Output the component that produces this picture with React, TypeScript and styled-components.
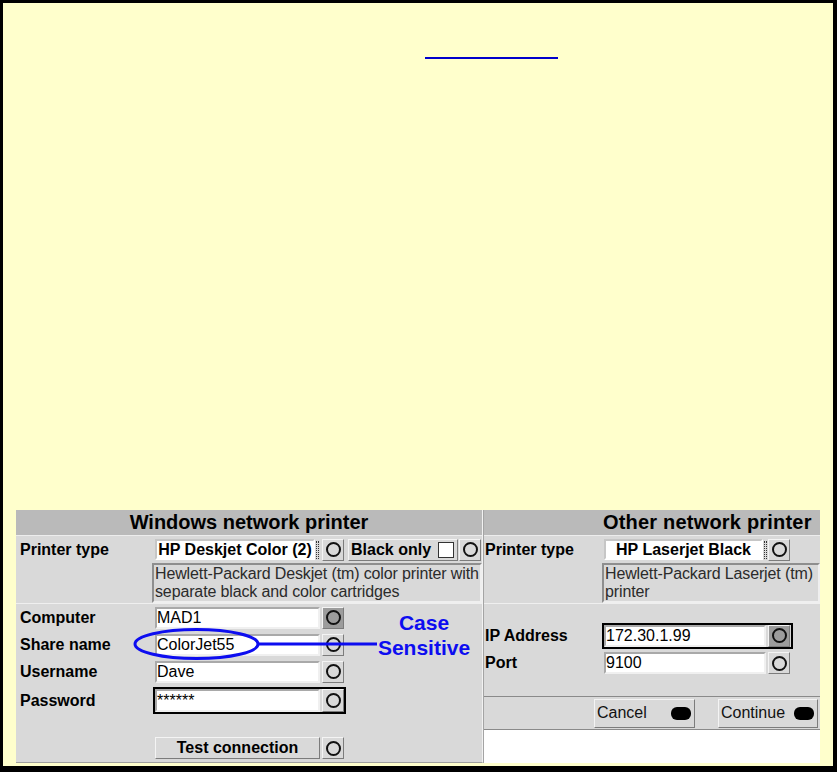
import React from "react";
import styled, { createGlobalStyle } from "styled-components";

const GlobalStyle = createGlobalStyle`
  *, *::before, *::after { box-sizing: border-box; }
  html, body { margin: 0; padding: 0; background: #ffffcc; }
  body { font-family: "Liberation Sans", Arial, Helvetica, sans-serif; }
`;

const Frame = styled.div`
  width: 837px;
  height: 772px;
  border-style: solid;
  border-color: #000;
  border-width: 3px 4px 6px 3px;
  background: #ffffcc;
  display: flex;
  flex-direction: column;
  overflow: hidden;
`;

const TopRule = styled.div`
  width: 133px;
  height: 2px;
  background: #0000cc;
  margin: 54px 0 0 422px;
  flex: none;
`;

const PanelsRow = styled.div`
  display: flex;
  margin: 451px 0 0 13px;
`;

const Panel = styled.div<{ $w: number; $edge: "left" | "right" }>`
  position: relative;
  width: ${(p) => p.$w}px;
  height: 253px;
  flex: none;
  display: flex;
  flex-direction: column;
  background: #d9d9d9;
  ${(p) =>
    p.$edge === "left"
      ? "border-right: 1px solid #f2f2f2; border-bottom: 1px solid #a0a0a0;"
      : "border-left: 1px solid #a4a4a4;"}
`;

const PanelHeader = styled.div<{ $indent?: number }>`
  height: 26px;
  flex: none;
  background: #bababa;
  border-bottom: 1px solid #ededed;
  font-size: 20px;
  font-weight: bold;
  line-height: 25px;
  color: #000;
  text-align: ${(p) => (p.$indent ? "left" : "center")};
  padding-left: ${(p) => p.$indent ?? 0}px;
  letter-spacing: ${(p) => (p.$indent ? "0.2px" : "0")};
  white-space: nowrap;
  overflow: hidden;
`;

const Row = styled.div<{ $h: number; $pl: number; $line?: boolean; $top?: boolean }>`
  height: ${(p) => p.$h}px;
  flex: none;
  display: flex;
  align-items: ${(p) => (p.$top ? "flex-start" : "center")};
  padding-left: ${(p) => p.$pl}px;
  ${(p) => (p.$line ? "border-bottom: 1px solid #efefef;" : "")}
`;

const Spacer = styled.div<{ $h: number }>`
  height: ${(p) => p.$h}px;
  flex: none;
`;

const Label = styled.div<{ $w: number }>`
  width: ${(p) => p.$w}px;
  flex: none;
  font-size: 16px;
  font-weight: bold;
  color: #000;
  white-space: nowrap;
`;

const Controls = styled.div<{ $ml?: number }>`
  display: flex;
  align-items: center;
  margin-left: ${(p) => p.$ml ?? 0}px;
`;

const Field = styled.div<{ $w: number; $h?: number }>`
  width: ${(p) => p.$w}px;
  height: ${(p) => p.$h ?? 22}px;
  flex: none;
  background: #fff;
  border: 2px solid;
  border-color: #a9a9a9 #f0f0f0 #f0f0f0 #a9a9a9;
  font-size: 16px;
  line-height: 18px;
  color: #000;
  display: flex;
  align-items: center;
  white-space: nowrap;
  overflow: hidden;
`;

const SelectBox = styled.div<{ $w: number }>`
  width: ${(p) => p.$w}px;
  height: 21px;
  flex: none;
  background: #fff;
  border: 2px solid;
  border-color: #c6c6c6 #fff #fff #c6c6c6;
  font-size: 16px;
  font-weight: bold;
  line-height: 17px;
  text-align: center;
  white-space: nowrap;
  overflow: hidden;
`;

const Dots = styled.span`
  width: 3px;
  height: 18px;
  margin: 0 1px;
  flex: none;
  border-left: 1px dotted #333;
  border-right: 1px dotted #333;
`;

const OButton = styled.div<{ $dark?: boolean; $h?: number; $ml?: number }>`
  width: 22px;
  height: ${(p) => p.$h ?? 22}px;
  flex: none;
  margin-left: ${(p) => p.$ml ?? 2}px;
  display: flex;
  align-items: center;
  justify-content: center;
  background: ${(p) => (p.$dark ? "#9c9c9c" : "#d9d9d9")};
  border: 1px solid;
  border-color: #f4f4f4 #7c7c7c #7c7c7c #f4f4f4;
`;

const Ring = styled.span`
  width: 15px;
  height: 15px;
  border: 2px solid #111;
  border-radius: 50%;
`;

const ToggleBox = styled.div`
  margin-left: 4px;
  width: 110px;
  height: 22px;
  flex: none;
  display: flex;
  align-items: center;
  justify-content: space-between;
  padding: 0 3px 0 2px;
  border: 1px solid;
  border-color: #f4f4f4 #7c7c7c #7c7c7c #f4f4f4;
  font-size: 16px;
  font-weight: bold;
  white-space: nowrap;
`;

const Check = styled.span`
  width: 16px;
  height: 16px;
  background: #fff;
  border: 1px solid #333;
`;

const DescBox = styled.div<{ $w: number }>`
  width: ${(p) => p.$w}px;
  height: 40px;
  flex: none;
  border: 2px solid;
  border-color: #8e8e8e #efefef #efefef #8e8e8e;
  font-size: 16px;
  line-height: 18px;
  letter-spacing: -0.13px;
  color: #2b2b2b;
  padding: 0 0 0 1px;
  white-space: nowrap;
  overflow: hidden;
`;

const Group = styled.div<{ $pr?: number }>`
  display: flex;
  align-items: stretch;
  border: 2px solid #000;
  padding-right: ${(p) => p.$pr ?? 0}px;
`;

const WideButton = styled.div`
  width: 165px;
  height: 22px;
  flex: none;
  display: flex;
  align-items: center;
  justify-content: center;
  border: 1px solid;
  border-color: #f4f4f4 #7c7c7c #7c7c7c #f4f4f4;
  font-size: 16px;
  font-weight: bold;
`;

const ButtonBar = styled.div`
  height: 34px;
  flex: none;
  display: flex;
  align-items: center;
  justify-content: flex-end;
  gap: 23px;
  padding-right: 2px;
  border-top: 1px solid #8a8a8a;
  border-bottom: 1px solid #8a8a8a;
`;

const BarButton = styled.div<{ $w: number }>`
  width: ${(p) => p.$w}px;
  height: 29px;
  display: flex;
  align-items: center;
  justify-content: space-between;
  padding: 0 3px 0 2px;
  border: 1px solid;
  border-color: #f4f4f4 #7c7c7c #7c7c7c #f4f4f4;
  font-size: 16px;
  color: #111;
`;

const Pill = styled.span`
  width: 20px;
  height: 13px;
  background: #000;
  border-radius: 6px;
`;

const WhiteArea = styled.div`
  flex: 1;
  background: #fff;
`;

const NoteMarks = styled.svg`
  position: absolute;
  left: 114px;
  top: 118px;
  width: 250px;
  height: 34px;
  pointer-events: none;
`;

const NoteText = styled.div`
  position: absolute;
  left: 348px;
  top: 100px;
  width: 120px;
  text-align: center;
  font-size: 21px;
  font-weight: bold;
  line-height: 25px;
  color: #0d0df0;
`;

const O = ({ dark, h, ml }: { dark?: boolean; h?: number; ml?: number }) => (
  <OButton $dark={dark} $h={h} $ml={ml}>
    <Ring />
  </OButton>
);

export default function App() {
  return (
    <>
      <GlobalStyle />
      <Frame>
        <TopRule />
        <PanelsRow>
          <Panel $w={467} $edge="left">
            <PanelHeader>Windows network printer</PanelHeader>
            <Row $h={27} $pl={4}>
              <Label $w={132}>Printer type</Label>
              <Controls $ml={3}>
                <SelectBox $w={160}>HP Deskjet Color (2)</SelectBox>
                <Dots />
                <O ml={2} />
                <ToggleBox>
                  Black only
                  <Check />
                </ToggleBox>
                <O ml={1} />
              </Controls>
            </Row>
            <Row $h={41} $pl={4} $line $top>
              <Label $w={132} />
              <DescBox $w={330}>
                Hewlett-Packard Deskjet (tm) color printer with
                <br />
                separate black and color cartridges
              </DescBox>
            </Row>
            <Row $h={27} $pl={4}>
              <Label $w={132}>Computer</Label>
              <Controls $ml={3}>
                <Field $w={165}>MAD1</Field>
                <O dark />
              </Controls>
            </Row>
            <Row $h={27} $pl={4}>
              <Label $w={132}>Share name</Label>
              <Controls $ml={3}>
                <Field $w={165}>ColorJet55</Field>
                <O />
              </Controls>
            </Row>
            <Row $h={27} $pl={4}>
              <Label $w={132}>Username</Label>
              <Controls $ml={3}>
                <Field $w={165}>Dave</Field>
                <O />
              </Controls>
            </Row>
            <Row $h={31} $pl={4}>
              <Label $w={132}>Password</Label>
              <Controls $ml={1}>
                <Group>
                  <Field $w={165} $h={23}>******</Field>
                  <O h={23} />
                </Group>
              </Controls>
            </Row>
            <Spacer $h={19} />
            <Row $h={26} $pl={4}>
              <Label $w={132} />
              <Controls $ml={3}>
                <WideButton>Test connection</WideButton>
                <O />
              </Controls>
            </Row>
            <NoteMarks viewBox="0 0 250 34">
              <ellipse cx="66.5" cy="16" rx="61.5" ry="14.5" fill="none" stroke="#0d0df0" strokeWidth="3" />
              <line x1="127.5" y1="16" x2="247" y2="16" stroke="#0d0df0" strokeWidth="3" />
            </NoteMarks>
            <NoteText>
              Case
              <br />
              Sensitive
            </NoteText>
          </Panel>
          <Panel $w={337} $edge="right">
            <PanelHeader $indent={119}>Other network printer</PanelHeader>
            <Row $h={27} $pl={1}>
              <Label $w={117}>Printer type</Label>
              <Controls $ml={2}>
                <SelectBox $w={159}>HP Laserjet Black</SelectBox>
                <Dots />
                <O ml={0} />
              </Controls>
            </Row>
            <Row $h={41} $pl={1} $line $top>
              <Label $w={117} />
              <DescBox $w={218}>
                Hewlett-Packard Laserjet (tm)
                <br />
                printer
              </DescBox>
            </Row>
            <Spacer $h={17} />
            <Row $h={29} $pl={1}>
              <Label $w={117}>IP Address</Label>
              <Controls>
                <Group $pr={1}>
                  <Field $w={162}>172.30.1.99</Field>
                  <O dark />
                </Group>
              </Controls>
            </Row>
            <Row $h={26} $pl={1}>
              <Label $w={117}>Port</Label>
              <Controls $ml={2}>
                <Field $w={162}>9100</Field>
                <O />
              </Controls>
            </Row>
            <Spacer $h={20} />
            <ButtonBar>
              <BarButton $w={101}>
                Cancel
                <Pill />
              </BarButton>
              <BarButton $w={100}>
                Continue
                <Pill />
              </BarButton>
            </ButtonBar>
            <WhiteArea />
          </Panel>
        </PanelsRow>
      </Frame>
    </>
  );
}
